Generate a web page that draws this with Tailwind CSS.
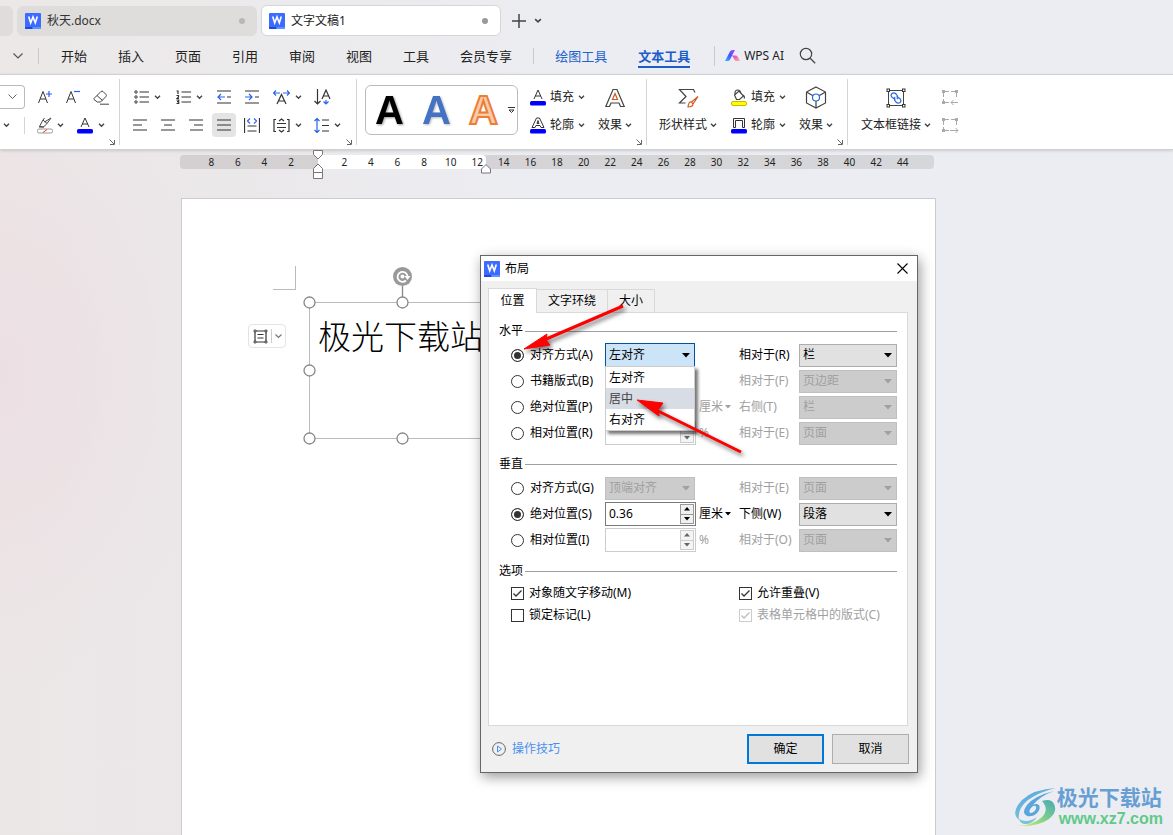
<!DOCTYPE html>
<html lang="zh-CN">
<head>
<meta charset="utf-8">
<title>文字文稿1</title>
<script src="https://cdn.jsdelivr.net/npm/@tailwindcss/browser@4"></script>
</head>
<body class="font-['Noto_Sans','Noto_Sans_CJK_SC',sans-serif] text-[12px] leading-4 text-[#222]">
<svg width="0" height="0" class="absolute">
  <symbol id="chev" viewBox="0 0 7 6"><path d="M1 1.8 3.5 4.2 6 1.8" fill="none" stroke="#444" stroke-width="1.4"/></symbol>
  <symbol id="launch" viewBox="0 0 6 6"><path d="M.5.5 5 5M5.500 1v4.500H1" fill="none" stroke="#666"/></symbol>
  <symbol id="wlogo" viewBox="0 0 16 16"><rect width="16" height="16" rx="1" fill="#3d6bff"/><path d="M0 14h7.500v2H1a1 1 0 0 1-1-1z" fill="#1d49dd"/><path d="M7.500 14H16v1a1 1 0 0 1-1 1H7.500z" fill="#5a95ff"/><path d="M3.700 3.500 5.700 9.800 8 4l2.300 5.800 2-6.300" fill="none" stroke="#fff" stroke-width="1.600"/></symbol>
  <symbol id="tri" viewBox="0 0 8 5"><path d="M0 0h8L4 4.500z" fill="currentColor"/></symbol>
  <symbol id="up" viewBox="0 0 6 4"><path d="M0 3.500 3 0l3 3.500z" fill="currentColor"/></symbol>
  <symbol id="down" viewBox="0 0 6 4"><path d="M0 0h6L3 3.500z" fill="currentColor"/></symbol>
</svg>

<div class="relative flex min-h-screen flex-col overflow-hidden bg-[#ecedf2] bg-[radial-gradient(ellipse_220px_320px_at_0_45%,#ecdfe3,#ecdfe300),linear-gradient(to_right,#ece7e7,#ebe8ea_20%,#ecedf2_45%)]">
  <header class="flex h-[74px] flex-col bg-linear-to-r from-[#ebe8e7] to-[#ecedf2] to-50%">
    <div class="flex h-[37px] items-end gap-1">
      <div class="mb-px h-[30px] w-[13px] rounded-r-md bg-[#dedddc]"></div>
      <button class="mb-px flex h-[30px] w-[240px] items-center gap-[6px] rounded-md bg-[#dedddc] pl-2 pr-3 text-[#333]">
        <svg class="size-4"><use href="#wlogo"/></svg><span class="flex-1 text-left">秋天.docx</span><i class="size-[6px] rounded-full bg-[#b8b8b8]"></i>
      </button>
      <button class="mb-px flex h-[31px] w-[240px] items-center gap-[6px] rounded-md border border-[#d6d6d8] bg-white pl-[7px] pr-3 text-[#222]">
        <svg class="size-4"><use href="#wlogo"/></svg><span class="flex-1 text-left">文字文稿1</span><i class="size-[6px] rounded-full bg-[#999]"></i>
      </button>
      <button class="mb-px ml-[7px] flex h-[31px] items-center" aria-label="新建"><svg class="size-[14px]" viewBox="0 0 14 14"><path d="M7 0v14M0 7h14" stroke="#444" stroke-width="1.500"/></svg></button>
      <button class="mb-px ml-1 flex h-[31px] items-center" aria-label="标签列表"><svg class="h-[7px] w-2"><use href="#chev"/></svg></button>
    </div>
    <nav class="flex h-[37px] items-center text-[13px] whitespace-nowrap">
      <button class="ml-[13px] w-[10px]" aria-label="更多"><svg width="10" height="6" viewBox="0 0 10 6"><path d="M.5.5 5 5 9.500.5" fill="none" stroke="#555" stroke-width="1.200"/></svg></button>
      <i class="ml-[15px] h-4 w-px bg-[#c9c9cb]"></i>
      <div class="ml-[22px] flex gap-[31px]"><button>开始</button><button>插入</button><button>页面</button><button>引用</button><button>审阅</button><button>视图</button><button>工具</button><button>会员专享</button></div>
      <i class="ml-[21px] h-4 w-px bg-[#c9c9cb]"></i>
      <button class="ml-[21px] text-[#2463cc]">绘图工具</button>
      <button class="relative ml-[31px] font-bold text-[#1b5cc9]">文本工具<i class="absolute inset-x-0 -bottom-[4px] h-[2px] bg-[#1b5cc9]"></i></button>
      <i class="ml-6 h-5 w-px bg-[#c9c9cb]"></i>
      <button class="ml-[10px] flex items-center gap-1 text-[12px]"><svg width="15" height="12" viewBox="0 0 15 12"><defs><linearGradient id="aiA" x1="0" y1="1" x2="1" y2="0"><stop stop-color="#26c6ff"/><stop offset=".5" stop-color="#3b54ff"/><stop offset="1" stop-color="#b14cff"/></linearGradient><linearGradient id="aiB" x1="0" x2="1" y2="1"><stop stop-color="#e43ad8"/><stop offset="1" stop-color="#ffb08a"/></linearGradient></defs><path d="M0 11 5 1.500Q5.800 0 7.300 0H10L5 9.500Q4.200 11 2.600 11z" fill="url(#aiA)"/><path d="M7 5.500h3.500q1.500 0 2.200 1.300L15 11h-3.500q-1.200 0-1.800-1z" fill="url(#aiB)"/></svg>WPS AI</button>
      <button class="ml-[15px]" aria-label="搜索"><svg width="17" height="17" viewBox="0 0 17 17"><circle cx="7" cy="7" r="5.700" fill="none" stroke="#444" stroke-width="1.200"/><path d="m11.200 11.200 5 5" stroke="#444" stroke-width="1.300"/></svg></button>
    </nav>
  </header>

  <section class="flex h-[76px] border-y border-[#d0d0d2] bg-white shadow-[0_1px_3px_#0002]">
    <!-- font -->
    <div class="relative w-[119px] shrink-0 pt-2">
      <div class="flex h-7 items-center">
        <button class="mr-[6px] flex h-6 w-[25px] items-center justify-center rounded-r-[4px] border border-l-0 border-[#bbb]" aria-label="字号"><svg width="9" height="6" viewBox="0 0 9 6"><path d="M.5.5 4.500 4.500 8.500.5" fill="none" stroke="#666"/></svg></button>
        <button class="flex w-7 justify-center" aria-label="增大字号"><svg width="14" height="14" viewBox="0 0 14 14" fill="none"><path d="M.5 13 5 1.500 9.500 13M2.200 9h5.600" stroke="#333"/><path d="M11 1v6M8 4h6" stroke="#2a62e8" stroke-width="1.200"/></svg></button>
        <button class="flex w-7 justify-center" aria-label="减小字号"><svg width="14" height="14" viewBox="0 0 14 14" fill="none"><path d="M.5 13 5 1.500 9.500 13M2.200 9h5.600" stroke="#333"/><path d="M8 1.500h6" stroke="#2a62e8" stroke-width="1.200"/></svg></button>
        <button class="flex w-7 justify-center" aria-label="清除格式"><svg width="16" height="15" viewBox="0 0 16 15" fill="none" stroke="#444"><path d="M1 8.500 8 1.500q1-.8 2 0l3 3q.8 1 0 2L7.500 12H4.300L1 9.500q-.5-.5 0-1zM4 5.500l5.500 5M7 14.200h9"/></svg></button>
      </div>
      <div class="flex h-7 items-center">
        <svg class="ml-[3px] h-[6px] w-[7px]"><use href="#chev"/></svg>
        <i class="ml-[14px] h-[17px] w-px bg-[#d5d5d5]"></i>
        <button class="ml-3 flex items-center gap-1" aria-label="突出显示"><svg width="16" height="17" viewBox="0 0 16 17" fill="none"><path d="M2.500 9.500 6 3l4 3.500-3.500 3.500zM6 3l1.500-2M7.500 5 14 1l-4 5.500M2 10h5" stroke="#444"/><rect x=".5" y="12" width="15" height="4" rx="1.500" stroke="#999"/><path d="m6 15.500 4-3" stroke="#e33"/></svg><svg class="h-[6px] w-[7px]"><use href="#chev"/></svg></button>
        <button class="ml-[13px] flex items-center gap-[5px]" aria-label="字体颜色"><svg width="16" height="17" viewBox="0 0 16 17" fill="none"><path d="M4 10 8 1l4 9M5.300 7h5.400" stroke="#333"/><rect y="12" width="16" height="4.500" rx="1.500" fill="#00f"/></svg><svg class="h-[6px] w-[7px]"><use href="#chev"/></svg></button>
      </div>
      <svg class="absolute bottom-1 right-1 size-[6px]"><use href="#launch"/></svg>
    </div>
    <i class="my-1 w-px bg-[#d5d5d5]"></i>
    <!-- paragraph -->
    <div class="relative w-[236px] shrink-0 pl-[6px] pt-2">
      <div class="flex h-7 items-center">
        <button class="flex w-[42px] items-center justify-center gap-[5px]" aria-label="项目符号"><svg width="15" height="14" viewBox="0 0 15 14" fill="none" stroke="#333"><circle cx="2" cy="2" r="1.200"/><circle cx="2" cy="7" r="1.200"/><circle cx="2" cy="12" r="1.200"/><path d="M5.500 2H15M5.500 7H15M5.500 12H15" stroke-width="1.200"/></svg><svg class="h-[6px] w-[7px]"><use href="#chev"/></svg></button>
        <button class="flex w-[42px] items-center justify-center gap-[5px]" aria-label="编号"><svg width="15" height="14" viewBox="0 0 15 14" fill="none" stroke="#333"><path d="M.5 1h1.500v3M.5 5.500h2v1.500L1 8.500h2M.5 10h2.200v3.500H.5M1 11.700h1.500M5.500 2H15M5.500 7H15M5.500 12H15" stroke-width="1.200"/></svg><svg class="h-[6px] w-[7px]"><use href="#chev"/></svg></button>
        <button class="flex w-7 justify-center" aria-label="减少缩进"><svg width="14" height="14" viewBox="0 0 14 14" fill="none"><path d="M0 1h14M10 7h4M0 13h14" stroke="#333" stroke-width="1.200"/><path d="M8 7H1M4 4 1 7l3 3" stroke="#2a62e8" stroke-width="1.200"/></svg></button>
        <button class="flex w-7 justify-center" aria-label="增加缩进"><svg width="14" height="14" viewBox="0 0 14 14" fill="none"><path d="M0 1h14M10 7h4M0 13h14" stroke="#333" stroke-width="1.200"/><path d="M0 7h7M4 4l3 3-3 3" stroke="#2a62e8" stroke-width="1.200"/></svg></button>
        <button class="flex w-[42px] items-center justify-center gap-[5px]" aria-label="字符缩放"><svg width="17" height="15" viewBox="0 0 17 15" fill="none"><path d="M4 14 8.500 4.500 13 14M5.500 11h6" stroke="#333" stroke-width="1.200"/><path d="M7 3H1M3 .5.5 3 3 5.500M10 3h6M14 .5 16.500 3 14 5.500" stroke="#2a62e8" stroke-width="1.200"/></svg><svg class="h-[6px] w-[7px]"><use href="#chev"/></svg></button>
        <button class="flex w-7 justify-center" aria-label="排序"><svg width="17" height="16" viewBox="0 0 17 16" fill="none"><path d="M3.500 0v15M.5 12l3 3 3-3M8 10l4-9 4 9M9.500 7h5" stroke="#333" stroke-width="1.200"/><path d="M12 11v4M9.500 12.500 12 15l2.500-2.500" stroke="#2a62e8" stroke-width="1.200"/></svg></button>
      </div>
      <div class="flex h-7 items-center">
        <button class="flex w-7 justify-center" aria-label="左对齐"><svg width="14" height="12" viewBox="0 0 14 12" stroke="#333" stroke-width="1.200"><path d="M0 1h14M0 6h9M0 11h14"/></svg></button>
        <button class="flex w-7 justify-center" aria-label="居中"><svg width="14" height="12" viewBox="0 0 14 12" stroke="#333" stroke-width="1.200"><path d="M0 1h14M3 6h8M0 11h14"/></svg></button>
        <button class="flex w-7 justify-center" aria-label="右对齐"><svg width="14" height="12" viewBox="0 0 14 12" stroke="#333" stroke-width="1.200"><path d="M0 1h14M5 6h9M1 11h13"/></svg></button>
        <button class="mx-[2px] flex size-6 items-center justify-center rounded bg-[#e4e4e4]" aria-label="两端对齐"><svg width="14" height="12" viewBox="0 0 14 12" stroke="#333" stroke-width="1.200"><path d="M0 1h14M0 6h14M0 11h14"/></svg></button>
        <button class="flex w-7 justify-center" aria-label="分散对齐"><svg width="16" height="15" viewBox="0 0 16 15" fill="none"><path d="M.5 0v15M15.500 0v15M3.500 8h9M3.500 13h9" stroke="#333" stroke-width="1.200"/><path d="M6 .5 3.500 3 6 5.500M10 .5 12.500 3 10 5.500" stroke="#2a62e8" stroke-width="1.200"/></svg></button>
        <button class="flex w-[42px] items-center justify-center gap-[5px]" aria-label="文字对齐"><svg width="17" height="15" viewBox="0 0 17 15" fill="none" stroke="#333" stroke-width="1.200"><path d="M3 1.500H1v12h2M14 1.500h2v12h-2M4 5.500h9M4 9.500h9M6 3l2.500-2L11 3M6 12l2.500 2 2.500-2"/></svg><svg class="h-[6px] w-[7px]"><use href="#chev"/></svg></button>
        <button class="flex w-[38px] items-center justify-center gap-[5px]" aria-label="行距"><svg width="15" height="15" viewBox="0 0 15 15" fill="none"><path d="M3 .5v14M.5 3 3 .5 5.500 3M.5 12 3 14.500 5.500 12" stroke="#2a62e8" stroke-width="1.200"/><path d="M8 2h7M8 7.500h7M8 13h7" stroke="#333" stroke-width="1.200"/></svg><svg class="h-[6px] w-[7px]"><use href="#chev"/></svg></button>
      </div>
      <svg class="absolute bottom-1 right-1 size-[6px]"><use href="#launch"/></svg>
    </div>
    <i class="my-1 w-px bg-[#d5d5d5]"></i>
    <!-- word art -->
    <div class="relative flex w-[289px] shrink-0 pl-2">
      <div class="mt-[10px] flex h-[50px] w-[153px] items-center justify-between rounded-md border border-[#bbb] pl-[9px] pr-[2px] font-['Liberation_Sans',sans-serif] text-[40px] font-bold leading-[48px]">
        <button class="text-black drop-shadow-[1px_1px_1px_#0006]" aria-label="黑色艺术字">A</button>
        <button class="ml-4 text-[#4472c4] drop-shadow-[1px_1px_1px_#0004]" aria-label="蓝色艺术字">A</button>
        <button class="ml-4 mr-2 text-[#f8cbad] [-webkit-text-stroke:2px_#ed7d31]" aria-label="橙色艺术字">A</button>
        <svg width="7" height="7" viewBox="0 0 7 7" fill="none" stroke="#333"><path d="M0 .5h7M1 3h5L3.500 5.500z"/></svg>
      </div>
      <div class="ml-3 flex flex-col pt-2">
        <button class="flex h-7 items-center gap-1"><svg width="16" height="17" viewBox="0 0 16 17" fill="none"><path d="M4 10 8 1l4 9M5.300 7h5.400" stroke="#333"/><rect y="12" width="16" height="4.500" rx="1.500" fill="#00f"/></svg>填充<svg class="h-[6px] w-[7px]"><use href="#chev"/></svg></button>
        <button class="flex h-7 items-center gap-1"><svg width="16" height="17" viewBox="0 0 16 17" fill="none"><path d="M2 10.500 6.500 1h3L14 10.500h-3L10 8.500H6l-1 2zM7 6.500l1-3 1 3z" stroke="#333"/><rect y="12" width="16" height="4.500" rx="1.500" fill="#00f"/></svg>轮廓<svg class="h-[6px] w-[7px]"><use href="#chev"/></svg></button>
      </div>
      <button class="ml-[13px] flex flex-col items-center pt-[13px]"><svg width="20" height="20" viewBox="0 0 20 20" fill="none"><path d="M.8 18.500 8 1.500h4l7.200 17h-3.700L14 15H6l-1.500 3.500z" stroke="#444" stroke-width="1.200"/><path d="m7.500 11.500 2.500-6 2.500 6z" stroke="#cf5a1c" stroke-width="1.200"/></svg><span class="mt-[9px] flex items-center gap-[3px]">效果<svg class="h-[6px] w-[7px]"><use href="#chev"/></svg></span></button>
      <svg class="absolute bottom-1 right-1 size-[6px]"><use href="#launch"/></svg>
    </div>
    <i class="my-1 w-px bg-[#d5d5d5]"></i>
    <!-- shape style -->
    <div class="relative flex w-[200px] shrink-0 pl-3">
      <button class="flex flex-col items-center pt-[13px]"><svg width="21" height="20" viewBox="0 0 21 20" fill="none"><path d="M17 4.500 15.500 1.500H1.500L8 8.500l-6.500 6.500h6" stroke="#444" stroke-width="1.200"/><path d="m20 8.500-6.500 5.500 1.500 2zM13.500 14q-3-.5-3.500 5 5 0 5-3" stroke="#cf5a1c" stroke-width="1.200"/></svg><span class="mt-[9px] flex items-center gap-[3px]">形状样式<svg class="h-[6px] w-[7px]"><use href="#chev"/></svg></span></button>
      <div class="ml-[14px] flex flex-col pt-2">
        <button class="flex h-7 items-center gap-1"><svg width="16" height="17" viewBox="0 0 16 17" fill="none"><path d="M3.500 6 8 2l4.500 5-4 3.500H5.500zM4 5q-.5-4 3-4 2 0 3 3M12.500 6q1.500 2 .7 3.500" stroke="#444" stroke-width="1.200"/><rect x=".5" y="12.500" width="15" height="4" rx="1.500" fill="#ff0" stroke="#c9b800"/></svg>填充<svg class="h-[6px] w-[7px]"><use href="#chev"/></svg></button>
        <button class="flex h-7 items-center gap-1"><svg width="16" height="17" viewBox="0 0 16 17" fill="none"><path d="M2.500 10.500v-9h11v9h-2v-7h-7v7z" stroke="#333"/><rect y="12" width="16" height="4.500" rx="1.500" fill="#00f"/></svg>轮廓<svg class="h-[6px] w-[7px]"><use href="#chev"/></svg></button>
      </div>
      <button class="ml-[13px] flex flex-col items-center pt-[11px]"><svg width="22" height="23" viewBox="0 0 22 23" fill="none"><path d="m11 1 9.500 5v11L11 22 1.500 17V6zM1.500 6 8 9.800M20.500 6 14 9.800M11 15v7" stroke="#444" stroke-width="1.200"/><circle cx="11" cy="11.500" r="3.500" stroke="#2a62e8" stroke-width="1.200"/></svg><span class="mt-2 flex items-center gap-[3px]">效果<svg class="h-[6px] w-[7px]"><use href="#chev"/></svg></span></button>
      <svg class="absolute bottom-1 right-1 size-[6px]"><use href="#launch"/></svg>
    </div>
    <i class="my-1 w-px bg-[#d5d5d5]"></i>
    <!-- text box links -->
    <div class="flex pl-[13px]">
      <button class="flex flex-col items-center pt-[13px]"><svg width="20" height="20" viewBox="0 0 20 20" fill="none"><path d="M4 2.500h12M4 17.500h12M2.500 4v12M17.500 4v12" stroke="#444"/><g fill="#fff" stroke="#333"><rect x="1" y="1" width="2.500" height="2.500"/><rect x="16.500" y="1" width="2.500" height="2.500"/><rect x="1" y="16.500" width="2.500" height="2.500"/><rect x="16.500" y="16.500" width="2.500" height="2.500"/></g><path d="M9.500 11.500 6.300 9.500Q4 7.500 6 5.500q2-1.500 4 .5l1.500 2q1 1.700-.7 3M10.500 8.500l3.200 2q2.300 2 .3 4-2 1.500-4-.5l-1.500-2q-1-1.700.7-3" stroke="#2a62e8" stroke-width="1.200"/></svg><span class="mt-[9px] flex items-center gap-[3px]">文本框链接<svg class="h-[6px] w-[7px]"><use href="#chev"/></svg></span></button>
      <div class="ml-[10px] flex flex-col pt-2">
        <button class="flex h-7 items-center" aria-label="前一文本框"><svg width="18" height="16" viewBox="0 0 18 16" fill="none" stroke="#aaa"><path d="M4 2.500h10M2.500 4v8M15.500 4v6M4 13.500h4" stroke-dasharray="4 2"/><path d="M1 1h3v3H1zM14 1h3v3h-3zM1 12h3v3H1z" fill="#aaa" stroke="none"/><path d="M17 13.500h-7M12.500 11 10 13.500l2.500 2.500"/></svg></button>
        <button class="flex h-7 items-center" aria-label="后一文本框"><svg width="18" height="16" viewBox="0 0 18 16" fill="none" stroke="#aaa"><path d="M4 2.500h10M2.500 4v8M15.500 4v6M4 13.500h4" stroke-dasharray="4 2"/><path d="M1 1h3v3H1zM14 1h3v3h-3zM1 12h3v3H1z" fill="#aaa" stroke="none"/><path d="M9 13.500h8M14.500 11 17 13.500 14.500 16"/></svg></button>
      </div>
    </div>
  </section>

  <main class="ml-[181px] flex w-[755px] flex-1 flex-col">
    <!-- ruler -->
    <div class="relative -ml-px mr-[2px] mt-[5px] h-[14px] rounded bg-linear-to-r from-[#d4d0d1] to-[#d6d7db]">
      <div class="absolute inset-y-0 left-[138px] w-[168px] rounded-r bg-white"></div>
      <div class="relative flex px-[18px] text-center text-[10px] leading-[14px] text-[#222]">
        <span class="flex-1">8</span><span class="flex-1">6</span><span class="flex-1">4</span><span class="flex-1">2</span><span class="flex-1"></span><span class="flex-1">2</span><span class="flex-1">4</span><span class="flex-1">6</span><span class="flex-1">8</span><span class="flex-1">10</span><span class="flex-1">12</span><span class="flex-1">14</span><span class="flex-1">16</span><span class="flex-1">18</span><span class="flex-1">20</span><span class="flex-1">22</span><span class="flex-1">24</span><span class="flex-1">26</span><span class="flex-1">28</span><span class="flex-1">30</span><span class="flex-1">32</span><span class="flex-1">34</span><span class="flex-1">36</span><span class="flex-1">38</span><span class="flex-1">40</span><span class="flex-1">42</span><span class="flex-1">44</span>
      </div>
      <svg class="absolute -top-[5px] left-[133px]" width="10" height="30" viewBox="0 0 10 30" fill="#fff" stroke="#777"><path d="M.5.5h9v4L5 9 .5 4.500zM.5 18.500 5 14l4.500 4.500v4h-9zM.5 22.500h9v6h-9z"/></svg>
      <svg class="absolute left-[301px] top-[9px]" width="10" height="10" viewBox="0 0 10 10" fill="#fff" stroke="#777"><path d="M.5 5 5 .5 9.500 5v4h-9z"/></svg>
    </div>
    <!-- page with the selected text box -->
    <div class="relative mt-[29px] flex-1 border border-b-0 border-[#ccc] bg-white">
      <i class="absolute left-[91px] top-[67px] h-6 w-[23px] border-b border-r border-[#bbb]"></i>
      <div class="absolute left-[66px] top-[125px] flex h-6 w-[38px] items-center justify-between rounded border border-[#e4e4e4] pl-1 pr-[3px]">
        <svg width="15" height="15" viewBox="0 0 15 15" fill="none" stroke="#333"><path d="M3 2h9M3 13h9M2 3v9M13 3v9M4.500 5.500h6M4.500 9h6" stroke-width="1.200"/><g fill="#fff"><circle cx="2" cy="2" r="1.100"/><circle cx="13" cy="2" r="1.100"/><circle cx="2" cy="13" r="1.100"/><circle cx="13" cy="13" r="1.100"/></g></svg>
        <i class="h-[14px] w-px bg-[#ccc]"></i>
        <svg width="7" height="5" viewBox="0 0 7 5"><path d="M.5.5 3.500 3.500 6.500.5" fill="none" stroke="#777" stroke-width="1.200"/></svg>
      </div>
      <div class="absolute left-[127px] top-[103px] h-[137px] w-[187px] border border-[#bbb] pl-2 pt-[14px] text-[33px] font-light leading-[40px] whitespace-nowrap text-black">极光下载站</div>
      <svg class="absolute left-[121px] top-[67px]" width="180" height="180" viewBox="0 0 180 180" fill="#fff" stroke="#888" stroke-width="1.300"><path d="M99.500 20v17"/><circle cx="6.500" cy="36.500" r="5.500"/><circle cx="99.500" cy="36.500" r="5.500"/><circle cx="6.500" cy="104.500" r="5.500"/><circle cx="6.500" cy="172.500" r="5.500"/><circle cx="99.500" cy="172.500" r="5.500"/><circle cx="99.500" cy="10.500" r="9.500" fill="#999" stroke="none"/><path d="M103 14.500A5 5 0 1 1 104.500 10" fill="none" stroke="#fff" stroke-width="1.800"/><path d="M101.500 10h6l-3 4z" stroke="none"/><circle cx="99.500" cy="10.500" r="2" stroke="none"/></svg>
    </div>
  </main>

  <!-- watermark -->
  <div class="absolute bottom-[7px] right-[10px] flex items-end">
    <svg width="43" height="40" viewBox="0 0 43 40" fill="none"><defs><linearGradient id="sw" x1="0" y1="0" x2=".7" y2="1"><stop stop-color="#4b9ae0"/><stop offset=".5" stop-color="#6db9dc"/><stop offset="1" stop-color="#7fc8d0"/></linearGradient><linearGradient id="sw2" x1="1" y1="0" x2="0" y2="1"><stop stop-color="#45a9b8"/><stop offset=".5" stop-color="#7ed08a"/><stop offset="1" stop-color="#e2ea6a"/></linearGradient></defs><path d="M42 0Q20 1 8 12-4 25 5 32 3 21 14 12 25 4 42 0z" fill="url(#sw)"/><path d="M40 3Q20 8 13 17 7 25 13 28q6 1 10-3 4-4 2-8-3-2-6 0Q26 8 40 3zM16 25q-2-3 3-7 4-1 3 3-2 4-6 4z" fill="#58a6dc" fill-rule="evenodd"/><path d="M28 13q9-3 12 3 4 8-5 15-11 8-32 7 16-1 24-8 9-8 1-17z" fill="url(#sw2)"/><path d="M5 31q8 5 18-2-5 8-13 7-4-1-5-5z" fill="#79c3dc"/></svg>
    <div class="flex flex-col whitespace-nowrap font-bold"><span class="text-[21px] leading-[25px] text-[#679fd4]">极光下载站</span><span class="pl-[2px] font-['Liberation_Sans',sans-serif] text-[16px] leading-[18px] text-[#5fc98b]">www.xz7.com</span></div>
  </div>

  <!-- layout dialog -->
  <form class="absolute left-[480px] top-[255px] flex h-[518px] w-[438px] flex-col border border-[#666] bg-[#f0f0f0] text-black shadow-[2px_4px_12px_#0006]">
    <div class="flex h-[25px] items-center bg-white pl-[3px] pr-[9px]">
      <svg class="size-4"><use href="#wlogo"/></svg><span class="ml-[5px] flex-1">布局</span>
      <button type="button" aria-label="关闭"><svg width="11" height="11" viewBox="0 0 11 11"><path d="m.5.5 10 10M10.500.5l-10 10" stroke="#000" stroke-width="1.100"/></svg></button>
    </div>
    <div class="mx-[7px] mt-[7px] flex h-6 items-end">
      <button type="button" class="z-10 -mb-px h-[25px] w-[49px] shrink-0 self-stretch border border-b-0 border-[#d9d9d9] bg-white">位置</button>
      <button type="button" class="h-[23px] w-[70px] border border-x-0 border-b-0 border-[#d9d9d9]">文字环绕</button>
      <button type="button" class="h-[23px] w-12 border border-b-0 border-[#d9d9d9]">大小</button>
    </div>
    <div class="mx-[7px] mr-[9px] flex flex-1 flex-col border border-[#d9d9d9] bg-white px-[10px] pt-[10px] whitespace-nowrap">
      <div class="flex items-center gap-[2px]">水平<i class="h-px flex-1 bg-[#a0a0a0]"></i></div>
      <div class="mt-[3px] grid auto-rows-[26px] grid-cols-[94px_94px_40px_60px_98px] items-center pl-3">
        <label class="flex items-center gap-[6px]"><input type="radio" name="h" checked class="size-[13px] appearance-none rounded-full border border-[#333] bg-white checked:bg-[#333] checked:shadow-[inset_0_0_0_2px_#fff]">对齐方式(A)</label>
        <div class="relative z-20 w-[90px]">
          <select aria-label="水平对齐方式" class="block h-6 w-full appearance-none border border-[#005499] bg-[#cce4f7] pl-[3px]"><option>左对齐</option><option>居中</option><option>右对齐</option></select>
          <svg class="pointer-events-none absolute right-[5px] top-[10px] h-[5px] w-2"><use href="#tri"/></svg>
          <ul class="absolute inset-x-0 top-[23px] border border-[#ccc] bg-white leading-[21px] shadow-[3px_3px_3px_#0008]"><li class="pl-[3px]">左对齐</li><li class="bg-[#d8dde5] pl-[3px] text-[#444]">居中</li><li class="pl-[3px]">右对齐</li></ul>
        </div>
        <span></span>
        <label for="r1">相对于(R)</label>
        <div class="relative"><select id="r1" class="block h-[23px] w-full appearance-none border border-[#adadad] bg-[#e1e1e1] pl-[3px]"><option>栏</option></select><svg class="pointer-events-none absolute right-[5px] top-[9px] h-[5px] w-2"><use href="#tri"/></svg></div>

        <label class="flex items-center gap-[6px]"><input type="radio" name="h" class="size-[13px] appearance-none rounded-full border border-[#333] bg-white">书籍版式(B)</label>
        <span></span><span></span>
        <label for="r2" class="text-[#a0a0a0]">相对于(F)</label>
        <div class="relative text-[#a0a0a0]"><select id="r2" disabled class="block h-[23px] w-full appearance-none border border-[#bfbfbf] bg-[#ccc] pl-[3px]"><option>页边距</option></select><svg class="pointer-events-none absolute right-[5px] top-[9px] h-[5px] w-2"><use href="#tri"/></svg></div>

        <label class="flex items-center gap-[6px]"><input type="radio" name="h" class="size-[13px] appearance-none rounded-full border border-[#333] bg-white">绝对位置(P)</label>
        <span></span><span class="flex items-center gap-[2px] text-[#a0a0a0]">厘米<svg class="h-1 w-[6px]"><use href="#down"/></svg></span>
        <label for="r3" class="text-[#a0a0a0]">右侧(T)</label>
        <div class="relative text-[#a0a0a0]"><select id="r3" disabled class="block h-[23px] w-full appearance-none border border-[#bfbfbf] bg-[#ccc] pl-[3px]"><option>栏</option></select><svg class="pointer-events-none absolute right-[5px] top-[9px] h-[5px] w-2"><use href="#tri"/></svg></div>

        <label class="flex items-center gap-[6px]"><input type="radio" name="h" class="size-[13px] appearance-none rounded-full border border-[#333] bg-white">相对位置(R)</label>
        <div class="flex h-6 w-[91px] border border-[#ccc] p-px text-[#666]"><input aria-label="水平相对位置" disabled class="min-w-0 flex-1 pl-[2px]"><div class="flex w-[14px] flex-col"><button type="button" disabled aria-label="增加" class="flex flex-1 items-center justify-center border border-[#ccc] bg-[#f4f4f4]"><svg class="h-1 w-[6px]"><use href="#up"/></svg></button><button type="button" disabled aria-label="减少" class="flex flex-1 items-center justify-center border border-t-0 border-[#ccc] bg-[#f4f4f4]"><svg class="h-1 w-[6px]"><use href="#down"/></svg></button></div></div>
        <span class="text-[#a0a0a0]">%</span>
        <label for="r4" class="text-[#a0a0a0]">相对于(E)</label>
        <div class="relative text-[#a0a0a0]"><select id="r4" disabled class="block h-[23px] w-full appearance-none border border-[#bfbfbf] bg-[#ccc] pl-[3px]"><option>页面</option></select><svg class="pointer-events-none absolute right-[5px] top-[9px] h-[5px] w-2"><use href="#tri"/></svg></div>
      </div>

      <div class="mt-[10px] flex items-center gap-[2px]">垂直<i class="h-px flex-1 bg-[#a0a0a0]"></i></div>
      <div class="mt-[3px] grid auto-rows-[26px] grid-cols-[94px_94px_40px_60px_98px] items-center pl-3">
        <label class="flex items-center gap-[6px]"><input type="radio" name="v" class="size-[13px] appearance-none rounded-full border border-[#333] bg-white">对齐方式(G)</label>
        <div class="relative w-[90px] text-[#a0a0a0]"><select aria-label="垂直对齐方式" disabled class="block h-[23px] w-full appearance-none border border-[#bfbfbf] bg-[#ccc] pl-[3px]"><option>顶端对齐</option></select><svg class="pointer-events-none absolute right-[5px] top-[9px] h-[5px] w-2"><use href="#tri"/></svg></div>
        <span></span>
        <label for="r5" class="text-[#a0a0a0]">相对于(E)</label>
        <div class="relative text-[#a0a0a0]"><select id="r5" disabled class="block h-[23px] w-full appearance-none border border-[#bfbfbf] bg-[#ccc] pl-[3px]"><option>页面</option></select><svg class="pointer-events-none absolute right-[5px] top-[9px] h-[5px] w-2"><use href="#tri"/></svg></div>

        <label class="flex items-center gap-[6px]"><input type="radio" name="v" checked class="size-[13px] appearance-none rounded-full border border-[#333] bg-white checked:bg-[#333] checked:shadow-[inset_0_0_0_2px_#fff]">绝对位置(S)</label>
        <div class="flex h-6 w-[91px] border border-[#7a7a7a] p-px"><input aria-label="垂直绝对位置" value="0.36" class="min-w-0 flex-1 pl-[2px]"><div class="flex w-[14px] flex-col"><button type="button" aria-label="增加" class="flex flex-1 items-center justify-center border border-[#999] bg-[#f0f0f0]"><svg class="h-1 w-[6px]"><use href="#up"/></svg></button><button type="button" aria-label="减少" class="flex flex-1 items-center justify-center border border-t-0 border-[#999] bg-[#f0f0f0]"><svg class="h-1 w-[6px]"><use href="#down"/></svg></button></div></div>
        <span class="flex items-center gap-[2px]">厘米<svg class="h-1 w-[6px]"><use href="#down"/></svg></span>
        <label for="r6">下侧(W)</label>
        <div class="relative"><select id="r6" class="block h-[23px] w-full appearance-none border border-[#adadad] bg-[#e1e1e1] pl-[3px]"><option>段落</option></select><svg class="pointer-events-none absolute right-[5px] top-[9px] h-[5px] w-2"><use href="#tri"/></svg></div>

        <label class="flex items-center gap-[6px]"><input type="radio" name="v" class="size-[13px] appearance-none rounded-full border border-[#333] bg-white">相对位置(I)</label>
        <div class="flex h-6 w-[91px] border border-[#ccc] p-px text-[#666]"><input aria-label="垂直相对位置" disabled class="min-w-0 flex-1 pl-[2px]"><div class="flex w-[14px] flex-col"><button type="button" disabled aria-label="增加" class="flex flex-1 items-center justify-center border border-[#ccc] bg-[#f4f4f4]"><svg class="h-1 w-[6px]"><use href="#up"/></svg></button><button type="button" disabled aria-label="减少" class="flex flex-1 items-center justify-center border border-t-0 border-[#ccc] bg-[#f4f4f4]"><svg class="h-1 w-[6px]"><use href="#down"/></svg></button></div></div>
        <span class="text-[#a0a0a0]">%</span>
        <label for="r7" class="text-[#a0a0a0]">相对于(O)</label>
        <div class="relative text-[#a0a0a0]"><select id="r7" disabled class="block h-[23px] w-full appearance-none border border-[#bfbfbf] bg-[#ccc] pl-[3px]"><option>页面</option></select><svg class="pointer-events-none absolute right-[5px] top-[9px] h-[5px] w-2"><use href="#tri"/></svg></div>
      </div>

      <div class="mt-[10px] flex items-center gap-[2px]">选项<i class="h-px flex-1 bg-[#a0a0a0]"></i></div>
      <div class="mt-[3px] grid auto-rows-[22px] grid-cols-[228px_1fr] items-center pl-3">
        <label class="flex items-center gap-[5px]"><span class="relative flex"><input type="checkbox" checked class="size-[13px] appearance-none border border-[#333] bg-white"><svg class="pointer-events-none absolute inset-0" width="13" height="13" viewBox="0 0 13 13"><path d="M2.500 6.500 5 9l5.500-5.500" fill="none" stroke="#333" stroke-width="1.300"/></svg></span>对象随文字移动(M)</label>
        <label class="flex items-center gap-[5px]"><span class="relative flex"><input type="checkbox" checked class="size-[13px] appearance-none border border-[#333] bg-white"><svg class="pointer-events-none absolute inset-0" width="13" height="13" viewBox="0 0 13 13"><path d="M2.500 6.500 5 9l5.500-5.500" fill="none" stroke="#333" stroke-width="1.300"/></svg></span>允许重叠(V)</label>
        <label class="flex items-center gap-[5px]"><input type="checkbox" class="size-[13px] appearance-none border border-[#333] bg-white">锁定标记(L)</label>
        <label class="flex items-center gap-[5px] text-[#a0a0a0]"><span class="relative flex"><input type="checkbox" checked disabled class="size-[13px] appearance-none border border-[#ccc] bg-white"><svg class="pointer-events-none absolute inset-0" width="13" height="13" viewBox="0 0 13 13"><path d="M2.500 6.500 5 9l5.500-5.500" fill="none" stroke="#bbb" stroke-width="1.300"/></svg></span>表格单元格中的版式(C)</label>
      </div>
    </div>
    <div class="flex h-[46px] items-center gap-2 pl-[11px] pr-2">
      <a href="#" class="flex flex-1 items-center gap-[6px] text-[#4a90f0]"><svg width="14" height="14" viewBox="0 0 14 14" fill="none"><circle cx="7" cy="7" r="6.400" stroke="#666"/><path d="M5.500 4v6l4-3z" stroke="#4a90f0"/></svg>操作技巧</a>
      <button class="h-[30px] w-[77px] border-2 border-[#0078d7] bg-[#e1e1e1]">确定</button>
      <button type="button" class="h-[30px] w-[77px] border border-[#adadad] bg-[#e1e1e1]">取消</button>
    </div>
  </form>

  <!-- pointer arrows over the dialog -->
  <svg class="pointer-events-none absolute left-[510px] top-[290px] z-30 drop-shadow-[2px_3px_2px_#0008]" width="250" height="180" viewBox="510 290 250 180">
    <path d="M623 306 544 340" stroke="#f00" stroke-width="3"/><path d="m524 349 23-15-1 6 4 5z" fill="#f00" stroke="#f00" stroke-width="1"/>
    <path d="M741 452 656 410" stroke="#f00" stroke-width="3"/><path d="m637 400 26 3-5 7 1 6z" fill="#f00" stroke="#f00" stroke-width="1"/>
  </svg>
</div>
</body>
</html>
